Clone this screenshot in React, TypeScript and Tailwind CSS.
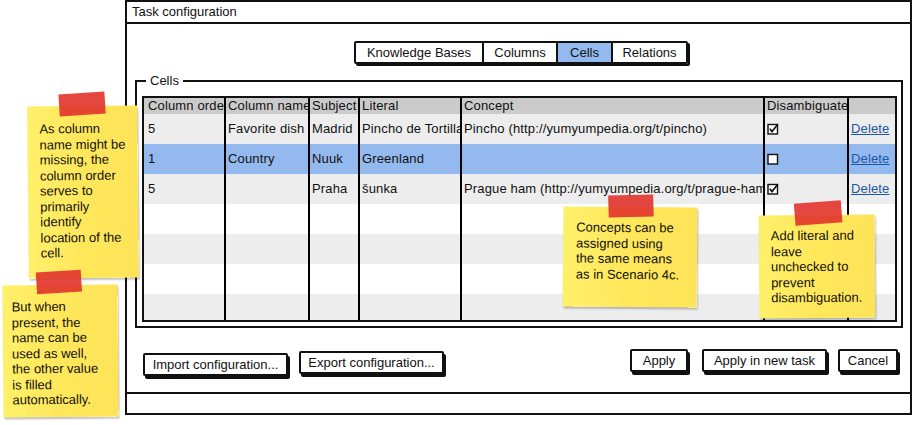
import React from 'react';

// column widths of the cells table (cell includes its right border)
const COLS = ['w-[82px]', 'w-[84px]', 'w-[50px]', 'w-[102px]', 'w-[303px]', 'w-[84px]', 'w-[45px]'];

type Row = {
  order: string;
  name: string;
  subject: string;
  literal: string;
  concept: string;
  checked: boolean;
};

const rows: Row[] = [
  { order: '5', name: 'Favorite dish', subject: 'Madrid', literal: 'Pincho de Tortilla', concept: 'Pincho (http://yumyumpedia.org/t/pincho)', checked: true },
  { order: '1', name: 'Country', subject: 'Nuuk', literal: 'Greenland', concept: '', checked: false },
  { order: '5', name: '', subject: 'Praha', literal: 'šunka', concept: 'Prague ham (http://yumyumpedia.org/t/prague-ham)', checked: true },
];

const CheckBox = ({ checked }: { checked: boolean }) => (
  <svg width="12" height="12" viewBox="0 0 12 12" className="shrink-0">
    <rect x="1" y="1.5" width="9.5" height="9.5" fill="white" stroke="#111" strokeWidth="1.4" />
    {checked && <path d="M2.8 5.8 L5 8.6 L10.8 1.2" fill="none" stroke="#111" strokeWidth="1.6" />}
  </svg>
);

const Cell = ({ i, children, first }: { i: number; children?: React.ReactNode; first?: boolean }) => (
  <div
    className={`${COLS[i]} h-full shrink-0 overflow-hidden whitespace-nowrap flex items-center ${
      i < 6 ? 'border-r-2 border-black' : ''
    } ${first ? 'pl-[4px]' : 'pl-[2px]'}`}
  >
    {children}
  </div>
);

const Button = ({ label, w, extra }: { label: string; w: string; extra?: string }) => (
  <div
    className={`${w} ${extra ?? ''} h-[23px] bg-white border-2 border-[#111] rounded-[2px] shadow-[2px_3px_0_#111] flex items-center justify-center text-[13px]`}
  >
    {label}
  </div>
);

const Note = ({
  pos,
  tape,
  pad,
  lines,
}: {
  pos: string;
  tape: string;
  pad: string;
  lines: string[];
}) => (
  <div
    className={`absolute ${pos} ${pad} bg-gradient-to-r from-[#fff06a] via-[#ffe75a] to-[#fde358] shadow-[1px_2px_2px_rgba(0,0,0,0.25)] text-[13px] leading-[15.5px] text-[#111]`}
  >
    <div className={`absolute ${tape} h-[22px] bg-[#e1332b]/90`} />
    {lines.map((l, i) => (
      <div key={i} className="whitespace-nowrap">
        {l}
      </div>
    ))}
  </div>
);

export default function App() {
  const empty = [3, 4, 5, 6];
  return (
    <div className="relative w-[913px] h-[425px] bg-white overflow-hidden font-['Liberation_Sans',Arial,sans-serif] text-[#111]">
      <div className="ml-[125px] w-[787px] h-[415px] border-2 border-[#111] flex flex-col">
        {/* title bar */}
        <div className="h-[22px] border-b-2 border-[#111] flex items-center pl-[5px] text-[13px]">
          Task configuration
        </div>

        <div className="flex-1 flex flex-col">
          {/* tabs */}
          <div className="mt-[17px] flex justify-center pl-[5px]">
            <div className="flex h-[23px] border-2 border-[#111] rounded-[2px] shadow-[2px_2px_0_#111] text-[13px]">
              <div className="w-[128px] flex items-center justify-center border-r-2 border-[#111] bg-white">
                Knowledge Bases
              </div>
              <div className="w-[74px] flex items-center justify-center border-r-2 border-[#111] bg-white">
                Columns
              </div>
              <div className="w-[55px] flex items-center justify-center border-r-2 border-[#111] bg-[#94b9ee]">
                Cells
              </div>
              <div className="w-[73px] flex items-center justify-center bg-white">Relations</div>
            </div>
          </div>

          {/* Cells group */}
          <div className="relative mt-[16px] ml-[8px] w-[768px] h-[248px] border-2 border-[#111] pt-[14px] pl-[5px] pr-[4px] pb-[4px]">
            <span className="absolute left-[9px] -top-[9px] bg-white px-[4px] text-[13px] leading-[15px]">
              Cells
            </span>
            <div className="h-[226px] border-2 border-[#111] overflow-hidden text-[13px] tracking-[0.15px]">
              <div className="flex h-[16px] bg-[#cbcbcb]">
                <Cell i={0} first>Column order</Cell>
                <Cell i={1}>Column name</Cell>
                <Cell i={2}>Subject</Cell>
                <Cell i={3}>Literal</Cell>
                <Cell i={4}>Concept</Cell>
                <Cell i={5}>Disambiguate</Cell>
                <Cell i={6} />
              </div>
              {rows.map((r, idx) => (
                <div key={idx} className={`flex h-[30px] ${idx === 1 ? 'bg-[#94b9ee]' : idx % 2 === 0 ? 'bg-[#ededed]' : 'bg-white'}`}>
                  <Cell i={0} first>{r.order}</Cell>
                  <Cell i={1}>{r.name}</Cell>
                  <Cell i={2}>{r.subject}</Cell>
                  <Cell i={3}>{r.literal}</Cell>
                  <Cell i={4}>{r.concept}</Cell>
                  <Cell i={5}>
                    <CheckBox checked={r.checked} />
                  </Cell>
                  <Cell i={6}>
                    <span className="text-[#1c57a3] underline">Delete</span>
                  </Cell>
                </div>
              ))}
              {empty.map((n) => (
                <div key={n} className={`flex h-[30px] ${n % 2 === 0 ? 'bg-[#ededed]' : 'bg-white'}`}>
                  {COLS.map((_, i) => (
                    <Cell key={i} i={i} />
                  ))}
                </div>
              ))}
            </div>
          </div>

          {/* buttons */}
          <div className="mt-[21px] flex items-start pl-[16px] pr-[12px]">
            <Button label="Import configuration..." w="w-[145px]" extra="mt-[4px]" />
            <Button label="Export configuration..." w="w-[145px]" extra="ml-[11px] mt-[2px]" />
            <div className="flex-1" />
            <Button label="Apply" w="w-[58px]" />
            <Button label="Apply in new task" w="w-[125px]" extra="ml-[14px]" />
            <Button label="Cancel" w="w-[60px]" extra="ml-[11px]" />
          </div>
        </div>

        {/* status bar */}
        <div className="h-[21px] border-t-2 border-[#111]" />
      </div>

      {/* sticky notes */}
      <Note
        pos="left-[28px] top-[106px] w-[110px] h-[172px] -rotate-[0.6deg]"
        pad="pl-[12px] pt-[15px]"
        tape="left-[32px] -top-[13px] w-[46px] -rotate-[3deg]"
        lines={['As column', 'name might be', 'missing, the', 'column order', 'serves to', 'primarily', 'identify', 'location of the', 'cell.']}
      />
      <Note
        pos="left-[3px] top-[285px] w-[115px] h-[132px] -rotate-[0.5deg]"
        pad="pl-[9px] pt-[14px]"
        tape="left-[34px] -top-[14px] w-[45px] -rotate-[3deg]"
        lines={['But when', 'present, the', 'name can be', 'used as well,', 'the other value', 'is filled', 'automatically.']}
      />
      <Note
        pos="left-[563px] top-[207px] w-[134px] h-[100px] rotate-[0.5deg]"
        pad="pl-[13px] pt-[13px]"
        tape="left-[45px] -top-[12px] w-[45px] -rotate-[2deg]"
        lines={['Concepts can be', 'assigned using', 'the same means', 'as in Scenario 4c.']}
      />
      <Note
        pos="left-[759px] top-[215px] w-[116px] h-[103px] -rotate-[0.4deg]"
        pad="pl-[12px] pt-[13px]"
        tape="left-[36px] -top-[13px] w-[47px] -rotate-[4deg]"
        lines={['Add literal and', 'leave', 'unchecked to', 'prevent', 'disambiguation.']}
      />
    </div>
  );
}
